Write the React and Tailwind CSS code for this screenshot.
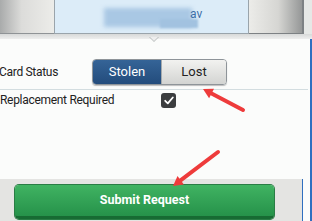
import React from "react";

function Arrow({ x1, y1, x2, y2 }) {
  const a = Math.atan2(y2 - y1, x2 - x1);
  const len = 11;
  const spread = 0.5;
  const p1 = [x2 - len * Math.cos(a - spread), y2 - len * Math.sin(a - spread)];
  const p2 = [x2 - len * Math.cos(a + spread), y2 - len * Math.sin(a + spread)];
  const bx = x2 - 7 * Math.cos(a);
  const by = y2 - 7 * Math.sin(a);
  return (
    <g>
      <line x1={x1} y1={y1} x2={bx} y2={by} stroke="#ee3b3b" strokeWidth="4" strokeLinecap="round" />
      <polygon points={`${x2},${y2} ${p1[0]},${p1[1]} ${p2[0]},${p2[1]}`} fill="#ee3b3b" />
    </g>
  );
}

export default function App() {
  return (
    <div className="relative w-[312px] h-[221px] overflow-hidden bg-[#fbfcfb] font-['Roboto',sans-serif]">
      {/* top header bar */}
      <div className="flex h-[34px]">
        <div className="w-[54px] border-b border-[#8f9396] bg-[linear-gradient(to_right,#a9abab,#dcdcda_40%,#ecece9)]" />
        <div className="relative w-[195px] border-x border-b border-[#9aa4ab] bg-[#dcecf8]">
          <div className="absolute left-[49px] top-[8px] w-[88px] h-[19px] bg-[#a9c8e4] blur-[2px]" />
          <div className="absolute left-[105px] top-[19px] w-[38px] h-[9px] bg-[#a2c2e0] blur-[1px]" />
          <span className="absolute left-[135px] top-[5px] text-[12px] text-[#3d6fa8]">av</span>
        </div>
        <div className="w-[55px] border-r-[2px] border-b border-[#7d8184] bg-[linear-gradient(to_right,#ecece9,#d6d6d3_55%,#959797)]" />
        <div className="flex-1 bg-[#e6e8e6]" />
      </div>

      {/* strip with caret */}
      <div className="relative h-[5px] bg-[linear-gradient(#d7d9d8,#eeeeee)]">
        <div className="absolute left-[149px] top-[3px] w-0 h-0 border-x-[5px] border-x-transparent border-t-[5px] border-t-[#b8bcbc]" />
        <div className="absolute left-[150px] top-[3px] w-0 h-0 border-x-[4px] border-x-transparent border-t-[4px] border-t-[#eeeeee]" />
      </div>

      {/* form body */}
      <div className="flex flex-col pr-[2px] border-r-[2px] border-[#2f6fc0] h-[182px]">
        <div className="flex items-center h-[50px] pt-[15px]">
          <span className="w-[93px] text-[12px] tracking-[-0.3px] text-[#222] -ml-[1px]">Card Status</span>
          <div className="flex h-[26px] w-[135px] rounded-[4px] overflow-hidden border border-[#8e9499] shadow-[0_1px_1px_rgba(0,0,0,0.25)]">
            <div className="w-[68px] flex items-center justify-center text-[13px] text-white bg-[linear-gradient(#356497,#234c7c)]">
              Stolen
            </div>
            <div className="flex-1 flex items-center justify-center text-[13px] text-[#222] border-l border-[#a5aaad] bg-[linear-gradient(#f2f2f0,#d3d4d2)]">
              Lost
            </div>
          </div>
        </div>
        <div className="h-px bg-[#d3dde0]" />
        <div className="flex items-center h-[20px]">
          <span className="w-[161px] text-[12px] tracking-[-0.3px] text-[#222]">Replacement Required</span>
          <div className="w-[15px] h-[15px] rounded-[3px] bg-[#3b3d3f] flex items-center justify-center">
            <svg width="10" height="9" viewBox="0 0 10 9">
              <path d="M1.2 4.8 L3.8 7.3 L8.8 1.5" fill="none" stroke="white" strokeWidth="1.8" strokeLinecap="round" strokeLinejoin="round" />
            </svg>
          </div>
        </div>
        <div className="flex-1" />
        <div className="flex h-[42px] bg-[#e4e4e2] mr-[5px] border-r border-[#2f6fc0] pt-[6px] pl-[15px] pr-[28px]">
          <button className="flex-1 h-[34px] rounded-[4px] bg-[linear-gradient(#40b362,#26924a)] border-b-[3px] border-[#176b33] shadow-[0_0_0_1px_#2a7d45] text-white font-bold text-[12.5px]">
            Submit Request
          </button>
        </div>
      </div>

      <svg className="absolute inset-0 pointer-events-none" width="312" height="221">
        <Arrow x1={243} y1={110} x2={203} y2={89} />
        <Arrow x1={218} y1={152} x2={173} y2={186} />
      </svg>
    </div>
  );
}
